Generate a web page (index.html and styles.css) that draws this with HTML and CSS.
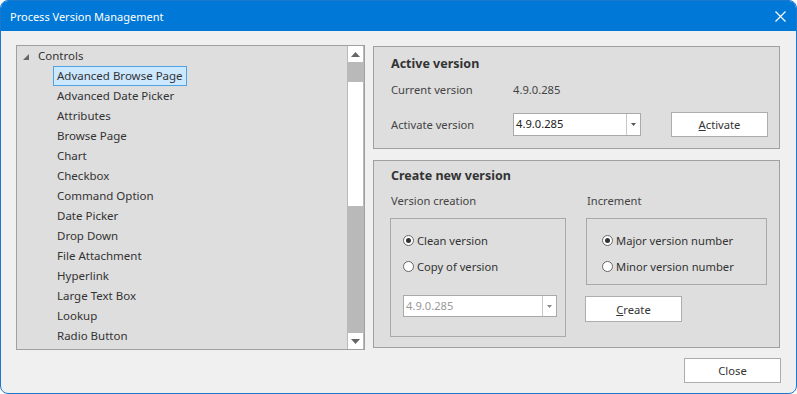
FILE: index.html
```html
<!DOCTYPE html>
<html>
<head>
<meta charset="utf-8">
<link rel="stylesheet" href="styles.css">
</head>
<body>
<div class="window">
  <div class="titlebar">
    <span class="title">Process Version Management</span>
    <svg class="close-x" width="11" height="11" viewBox="0 0 11 11"><path d="M0.5 0.5 L10.5 10.5 M10.5 0.5 L0.5 10.5" stroke="#fff" stroke-width="1.2"/></svg>
  </div>
  <div class="content">
    <div class="main">
      <div class="tree-panel">
        <div class="tree">
          <div class="row root">
            <svg class="expander" width="6" height="6" viewBox="0 0 6 6"><polygon points="6,0 6,6 0,6" fill="#666"/></svg>
            <span>Controls</span>
          </div>
          <div class="row item"><span class="sel">Advanced Browse Page</span></div>
          <div class="row item"><span>Advanced Date Picker</span></div>
          <div class="row item"><span>Attributes</span></div>
          <div class="row item"><span>Browse Page</span></div>
          <div class="row item"><span>Chart</span></div>
          <div class="row item"><span>Checkbox</span></div>
          <div class="row item"><span>Command Option</span></div>
          <div class="row item"><span>Date Picker</span></div>
          <div class="row item"><span>Drop Down</span></div>
          <div class="row item"><span>File Attachment</span></div>
          <div class="row item"><span>Hyperlink</span></div>
          <div class="row item"><span>Large Text Box</span></div>
          <div class="row item"><span>Lookup</span></div>
          <div class="row item"><span>Radio Button</span></div>
        </div>
        <div class="scrollbar">
          <div class="sb-btn"><svg width="9" height="5" viewBox="0 0 9 5"><polygon points="4.5,0 9,5 0,5" fill="#666"/></svg></div>
          <div class="sb-track sb-pre"></div>
          <div class="sb-thumb"></div>
          <div class="sb-track sb-post"></div>
          <div class="sb-btn"><svg width="9" height="5" viewBox="0 0 9 5"><polygon points="0,0 9,0 4.5,5" fill="#666"/></svg></div>
        </div>
      </div>
      <div class="right">
        <div class="panel active-panel">
          <div class="panel-title">Active version</div>
          <div class="info-row">
            <span class="label">Current version</span>
            <span class="value">4.9.0.285</span>
          </div>
          <div class="activate-row">
            <span class="label">Activate version</span>
            <div class="combo">
              <span class="combo-text">4.9.0.285</span>
              <span class="combo-arrow"><svg width="5" height="3" viewBox="0 0 5 3"><polygon points="0,0 5,0 2.5,3" fill="#555"/></svg></span>
            </div>
            <button class="btn activate-btn"><u>A</u>ctivate</button>
          </div>
        </div>
        <div class="panel create-panel">
          <div class="panel-title">Create new version</div>
          <div class="create-cols">
            <div class="col col-left">
              <div class="group-label">Version creation</div>
              <div class="group-box vc-box">
                <div class="radio-row"><span class="radio checked"></span><span>Clean version</span></div>
                <div class="radio-row"><span class="radio"></span><span>Copy of version</span></div>
                <div class="combo combo-disabled">
                  <span class="combo-text">4.9.0.285</span>
                  <span class="combo-arrow"><svg width="5" height="3" viewBox="0 0 5 3"><polygon points="0,0 5,0 2.5,3" fill="#888"/></svg></span>
                </div>
              </div>
            </div>
            <div class="col col-right">
              <div class="group-label">Increment</div>
              <div class="group-box inc-box">
                <div class="radio-row"><span class="radio checked"></span><span>Major version number</span></div>
                <div class="radio-row"><span class="radio"></span><span>Minor version number</span></div>
              </div>
              <button class="btn create-btn"><u>C</u>reate</button>
            </div>
          </div>
        </div>
      </div>
    </div>
    <div class="footer">
      <button class="btn close-btn">Close</button>
    </div>
  </div>
</div>
</body>
</html>
```
FILE: styles.css
```css
* { box-sizing: border-box; }
html, body { margin: 0; padding: 0; background: #fff; }
body {
  font-family: "Noto Sans", "Open Sans", sans-serif;
  font-size: 11.2px;
  color: #333;
}
.window {
  width: 797px;
  height: 394px;
  border: 1px solid #1a79cf;
  border-radius: 8px;
  overflow: hidden;
  background: #f0f0f0;
  display: flex;
  flex-direction: column;
}
.titlebar {
  height: 30px;
  flex: none;
  background: #0078d7;
  color: #fff;
  display: flex;
  align-items: center;
  justify-content: space-between;
  padding: 1px 10px 0 9px;
}
.title { font-size: 11px; line-height: 16px; }
.close-x { display: block; }
.content {
  flex: 1;
  display: flex;
  flex-direction: column;
  padding: 14px 16px 0 15px;
}
.main { display: flex; gap: 8px; height: 305px; }
.tree-panel {
  width: 349px;
  height: 305px;
  border: 1px solid #a0a0a0;
  background: #dedede;
  display: flex;
}
.tree { flex: 1; padding-left: 5px; font-size: 11.5px; }
.row { height: 20px; display: flex; align-items: center; line-height: 16px; white-space: nowrap; }
.root .expander { margin: 1px 9px 0 1px; display: block; }
.item { padding-left: 31px; }
.item span { padding: 0 3px; border: 1px solid transparent; height: 20px; line-height: 18px; }
.item span.sel { background: #cce8ff; border-color: #4ea3e4; }
.scrollbar {
  width: 17px;
  background: #b9b9b9;
  display: flex;
  flex-direction: column;
  align-items: center;
}
.sb-btn {
  width: 15px;
  height: 16px;
  background: #fff;
  display: flex;
  align-items: center;
  justify-content: center;
}
.sb-pre { height: 20px; }
.sb-thumb { width: 15px; height: 124px; background: #fff; }
.sb-post { flex: 1; }
.right { flex: 1; display: flex; flex-direction: column; gap: 11px; padding-top: 1px; }
.panel { border: 1px solid #a0a0a0; background: #dedede; padding-left: 17px; }
.active-panel { height: 103px; padding-top: 9px; }
.create-panel { height: 188px; padding-top: 7px; }
.panel-title { font-weight: bold; font-size: 12.5px; line-height: 16px; color: #333; }
.label { color: #444; }
.info-row { display: flex; margin-top: 10px; line-height: 16px; }
.info-row .label, .activate-row .label { width: 122px; }
.value { color: #444; }
.activate-row { display: flex; align-items: center; margin-top: 14px; }
.combo {
  width: 128px;
  height: 23px;
  border: 1px solid #a9a9a9;
  background: #fff;
  display: flex;
}
.combo-text { flex: 1; padding-left: 2px; line-height: 20px; color: #222; }
.combo-arrow {
  width: 14px;
  border-left: 1px solid #c8c8c8;
  display: flex;
  align-items: center;
  justify-content: center;
}
.btn {
  font-family: inherit;
  font-size: 11.2px;
  color: #333;
  background: #fff;
  border: 1px solid #adadad;
  padding: 0;
  width: 97px;
  height: 25px;
}
.activate-btn { margin-left: 30px; }
.create-cols { display: flex; margin-top: 9px; margin-left: -1px; }
.group-label { line-height: 16px; color: #444; padding-left: 1px; }
.group-box { border: 1px solid #a9a9a9; margin-top: 9px; }
.col-left { width: 176px; }
.col-right { margin-left: 20px; }
.vc-box { height: 119px; padding: 11px 0 0 12px; }
.inc-box { width: 181px; height: 67px; padding: 11px 0 0 15px; }
.radio-row { display: flex; align-items: center; height: 20px; margin-bottom: 6px; white-space: nowrap; color: #333; }
.radio {
  width: 11px;
  height: 11px;
  border: 1px solid #666;
  border-radius: 50%;
  background: #fff;
  margin-right: 3px;
  position: relative;
  flex: none;
}
.radio.checked::after {
  content: "";
  position: absolute;
  left: 2px; top: 2px;
  width: 5px; height: 5px;
  border-radius: 50%;
  background: #333;
}
.combo-disabled { width: 154px; height: 22px; margin-top: 19px; }
.combo-disabled .combo-text { color: #999; line-height: 19px; }
.create-btn { margin-top: 11px; margin-left: -1px; height: 26px; }
.footer { display: flex; justify-content: flex-end; padding-top: 8px; }
.close-btn { margin-right: -1px; }
```
